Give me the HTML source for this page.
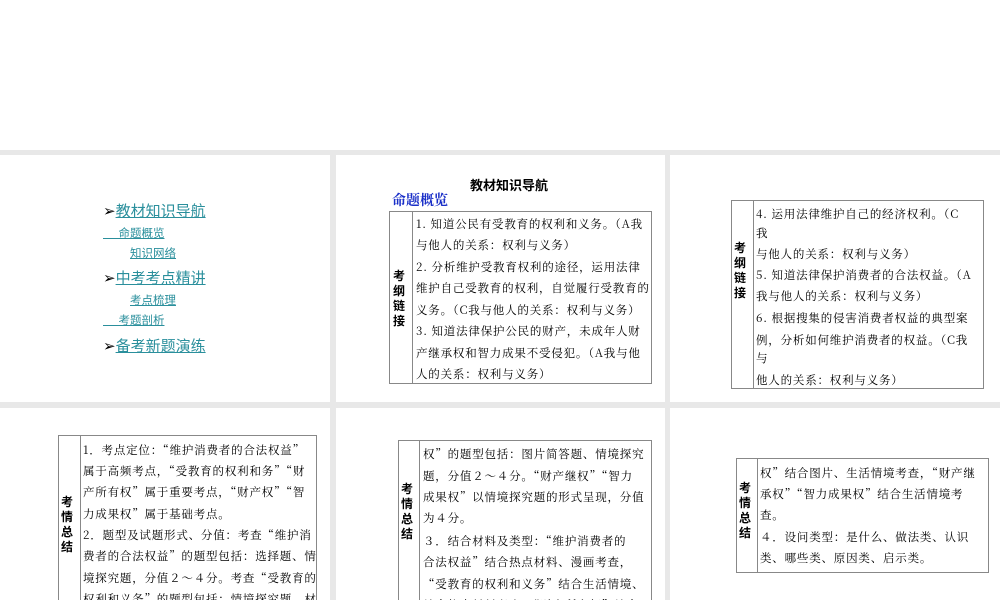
<!DOCTYPE html>
<html><head><meta charset="utf-8"><style>
*{margin:0;padding:0;box-sizing:border-box}
html,body{width:1000px;height:600px;overflow:hidden}
body{background:#fff;position:relative;font-family:"Noto Serif CJK SC",serif}
.bg{position:absolute;left:0;top:150px;width:1000px;height:450px;background:#e8e8e8}
.p{position:absolute;background:#fff}
.a{position:absolute;white-space:nowrap}
.t{position:absolute;border:1px solid #888;background:#fff}
.lc{position:absolute;top:0;bottom:0;left:0;border-right:1px solid #888}
.lab{position:absolute;font:bold 12px/15px "Noto Sans CJK SC",sans-serif;width:14px;color:#000}
.l{position:absolute;font-size:11.5px;line-height:14px;color:#000;white-space:nowrap;font-family:"Noto Serif CJK SC",serif;letter-spacing:0.8px}
.nav{color:#2a8f9c;text-decoration:underline;font-family:"Noto Sans CJK SC",sans-serif}
</style></head><body>
<div class="bg"></div>
<div class="p" style="left:0;top:155px;width:330px;height:247px"></div>
<div class="p" style="left:336px;top:155px;width:329px;height:247px"></div>
<div class="p" style="left:670px;top:155px;width:330px;height:247px"></div>
<div class="p" style="left:0;top:408px;width:330px;height:192px"></div>
<div class="p" style="left:336px;top:408px;width:329px;height:192px"></div>
<div class="p" style="left:670px;top:408px;width:330px;height:192px"></div>

<!-- panel 1 -->
<div class="a" style="left:103px;top:201px;font-size:15px;line-height:20px;font-family:'Noto Sans CJK SC',sans-serif">➢<span class="nav">教材知识导航</span></div>
<div class="a nav" style="left:103px;top:225px;font-size:11.5px;line-height:16px;white-space:pre">      命题概览</div>
<div class="a nav" style="left:130px;top:245px;font-size:11.5px;line-height:16px">知识网络</div>
<div class="a" style="left:103px;top:268px;font-size:15px;line-height:20px;font-family:'Noto Sans CJK SC',sans-serif">➢<span class="nav">中考考点精讲</span></div>
<div class="a nav" style="left:130px;top:292px;font-size:11.5px;line-height:16px">考点梳理</div>
<div class="a nav" style="left:103px;top:312px;font-size:11.5px;line-height:16px;white-space:pre">      考题剖析</div>
<div class="a" style="left:103px;top:336px;font-size:15px;line-height:20px;font-family:'Noto Sans CJK SC',sans-serif">➢<span class="nav">备考新题演练</span></div>

<!-- panel 2 -->
<div class="a" style="left:470px;top:176px;font:bold 13px/18px 'Noto Sans CJK SC',sans-serif">教材知识导航</div>
<div class="a" style="left:392px;top:191px;font:bold 14px/18px 'Noto Serif CJK SC',serif;color:#1a2fc8">命题概览</div>
<div class="t" style="left:389px;top:211px;width:263px;height:173px"><div class="lc" style="width:23px"></div></div>
<div class="lab" style="left:393px;top:268px">考纲链接</div>
<div class="l" style="left:416px;top:217px">1. 知道公民有受教育的权利和义务。（A我</div>
<div class="l" style="left:416px;top:238px">与他人的关系：权利与义务）</div>
<div class="l" style="left:416px;top:260px">2.  分析维护受教育权利的途径，运用法律</div>
<div class="l" style="left:416px;top:281px">维护自己受教育的权利，自觉履行受教育的</div>
<div class="l" style="left:416px;top:303px">义务。（C我与他人的关系：权利与义务）</div>
<div class="l" style="left:416px;top:324px">3.  知道法律保护公民的财产，未成年人财</div>
<div class="l" style="left:416px;top:346px">产继承权和智力成果不受侵犯。（A我与他</div>
<div class="l" style="left:416px;top:367px">人的关系：权利与义务）</div>

<!-- panel 3 -->
<div class="t" style="left:731px;top:200px;width:253px;height:189px"><div class="lc" style="width:22px"></div></div>
<div class="lab" style="left:734px;top:240px">考纲链接</div>
<div class="l" style="left:756px;top:207px">4.  运用法律维护自己的经济权利。（C</div>
<div class="l" style="left:756px;top:226px">我</div>
<div class="l" style="left:756px;top:247px">与他人的关系：权利与义务）</div>
<div class="l" style="left:756px;top:268px">5.  知道法律保护消费者的合法权益。（A</div>
<div class="l" style="left:756px;top:289px">我与他人的关系：权利与义务）</div>
<div class="l" style="left:756px;top:311px">6.  根据搜集的侵害消费者权益的典型案</div>
<div class="l" style="left:756px;top:333px">例，分析如何维护消费者的权益。（C我</div>
<div class="l" style="left:756px;top:351px">与</div>
<div class="l" style="left:756px;top:373px">他人的关系：权利与义务）</div>

<!-- panel 4 -->
<div class="t" style="left:58px;top:435px;width:259px;height:180px"><div class="lc" style="width:22px"></div></div>
<div class="lab" style="left:61px;top:494px">考情总结</div>
<div class="l" style="left:83px;top:443px">1．考点定位：“维护消费者的合法权益”</div>
<div class="l" style="left:83px;top:464px">属于高频考点，“受教育的权利和务”“财</div>
<div class="l" style="left:83px;top:485px">产所有权”属于重要考点，“财产权”“智</div>
<div class="l" style="left:83px;top:507px">力成果权”属于基础考点。</div>
<div class="l" style="left:83px;top:528px">2．题型及试题形式、分值：考查“维护消</div>
<div class="l" style="left:83px;top:549px">费者的合法权益”的题型包括：选择题、情</div>
<div class="l" style="left:83px;top:571px">境探究题，分值２～４分。考查“受教育的</div>
<div class="l" style="left:83px;top:592px">权利和义务”的题型包括：情境探究题、材</div>

<!-- panel 5 -->
<div class="t" style="left:398px;top:440px;width:254px;height:180px"><div class="lc" style="width:21px"></div></div>
<div class="lab" style="left:401px;top:481px">考情总结</div>
<div class="l" style="left:423px;top:447px">权”的题型包括：图片简答题、情境探究</div>
<div class="l" style="left:423px;top:469px">题，分值２～４分。“财产继权”“智力</div>
<div class="l" style="left:423px;top:490px">成果权”以情境探究题的形式呈现，分值</div>
<div class="l" style="left:423px;top:511px">为４分。</div>
<div class="l" style="left:423px;top:534px">３．结合材料及类型：“维护消费者的</div>
<div class="l" style="left:423px;top:555px">合法权益”结合热点材料、漫画考查，</div>
<div class="l" style="left:423px;top:577px">“受教育的权利和义务”结合生活情境、</div>
<div class="l" style="left:423px;top:598px">结合热点材料考查，“财产所有权”结合</div>

<!-- panel 6 -->
<div class="t" style="left:736px;top:458px;width:253px;height:115px"><div class="lc" style="width:21px"></div></div>
<div class="lab" style="left:739px;top:480px">考情总结</div>
<div class="l" style="left:760px;top:466px">权”结合图片、生活情境考查，“财产继</div>
<div class="l" style="left:760px;top:487px">承权”“智力成果权”结合生活情境考</div>
<div class="l" style="left:760px;top:508px">查。</div>
<div class="l" style="left:760px;top:530px">４．设问类型：是什么、做法类、认识</div>
<div class="l" style="left:760px;top:551px">类、哪些类、原因类、启示类。</div>
</body></html>
